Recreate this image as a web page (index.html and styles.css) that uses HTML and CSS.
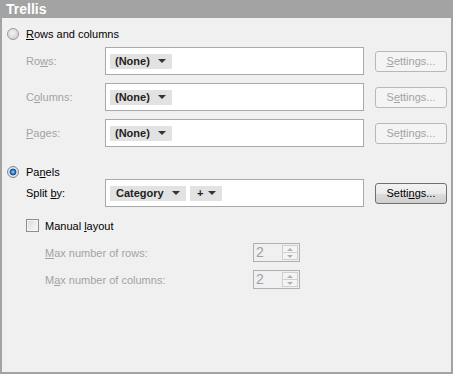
FILE: index.html
```html
<!DOCTYPE html>
<html lang="en">
<head>
    <meta charset="UTF-8">
    <title>Trellis</title>
    <link rel="stylesheet" href="styles.css">
</head>
<body>
    <div class="window">
        <div class="title">Trellis</div>

        <div class="content">
            <div class="radio-row first">
                <span class="radio"></span>
                <span class="label"><u>R</u>ows and columns</span>
            </div>

            <div class="axis-row">
                <span class="axis-label disabled">Ro<u>w</u>s:</span>
                <div class="axis-box">
                    <span class="pill"><b>(None)</b><span class="arrow"></span></span>
                </div>
                <button class="settings-btn" disabled><u>S</u>ettings...</button>
            </div>

            <div class="axis-row">
                <span class="axis-label disabled">C<u>o</u>lumns:</span>
                <div class="axis-box">
                    <span class="pill"><b>(None)</b><span class="arrow"></span></span>
                </div>
                <button class="settings-btn" disabled>S<u>e</u>ttings...</button>
            </div>

            <div class="axis-row">
                <span class="axis-label disabled"><u>P</u>ages:</span>
                <div class="axis-box">
                    <span class="pill"><b>(None)</b><span class="arrow"></span></span>
                </div>
                <button class="settings-btn" disabled>Se<u>t</u>tings...</button>
            </div>

            <div class="radio-row panels">
                <span class="radio checked"></span>
                <span class="label">Pa<u>n</u>els</span>
            </div>

            <div class="axis-row split">
                <span class="axis-label">Split <u>b</u>y:</span>
                <div class="axis-box">
                    <span class="pill wide"><b>Category</b><span class="arrow"></span></span>
                    <span class="pill plus"><b>+</b><span class="arrow"></span></span>
                </div>
                <button class="settings-btn active">Setti<u>n</u>gs...</button>
            </div>

            <div class="check-row">
                <span class="checkbox"></span>
                <span class="label">Manual <u>l</u>ayout</span>
            </div>

            <div class="spin-row">
                <span class="spin-label disabled"><u>M</u>ax number of rows:</span>
                <div class="spinner">
                    <span class="spin-value">2</span>
                    <span class="spin-buttons">
                        <span class="spin-up"></span>
                        <span class="spin-down"></span>
                    </span>
                </div>
            </div>

            <div class="spin-row">
                <span class="spin-label disabled">M<u>a</u>x number of columns:</span>
                <div class="spinner">
                    <span class="spin-value">2</span>
                    <span class="spin-buttons">
                        <span class="spin-up"></span>
                        <span class="spin-down"></span>
                    </span>
                </div>
            </div>
        </div>
    </div>
</body>
</html>
```

FILE: styles.css
```css
* {
    box-sizing: border-box;
}

body {
    margin: 0;
    font-family: 'Liberation Sans', Arial, sans-serif;
    font-size: 11px;
    color: #000;
}

u {
    text-decoration: underline;
    text-underline-offset: 1px;
}

.window {
    width: 453px;
    height: 374px;
    background-color: #f0f0f0;
    border: 2px solid #a3a3a3;
    border-top: none;
}

.title {
    height: 18px;
    margin: 0 -2px;
    padding-left: 6px;
    background-color: #a3a3a3;
    color: #fff;
    font-size: 14px;
    font-weight: bold;
    line-height: 18px;
}

.content {
    padding-left: 5px;
}

.disabled {
    color: #a3a3a3;
}

/* radio buttons */
.radio-row {
    display: flex;
    align-items: center;
    height: 12px;
}

.radio-row.first {
    margin-top: 10px;
}

.radio-row.panels {
    margin-top: 19px;
}

.radio {
    width: 12px;
    height: 12px;
    border-radius: 50%;
    border: 1px solid #9a9a9a;
    background: radial-gradient(circle at 45% 40%, #f4f4f4 0, #dcdcdc 55%, #c4c4c4 100%);
    margin-right: 7px;
    flex-shrink: 0;
}

.radio.checked {
    border-color: #7f8a99;
    background: radial-gradient(circle at 50% 50%, #9fdcff 0, #2a8ad4 25%, #0b3f82 45%, #e6e6e6 52%, #d0d0d0 100%);
}

/* axis rows */
.axis-row {
    display: flex;
    align-items: center;
    height: 28px;
    margin-top: 8px;
    padding-left: 19px;
}

.radio-row.first + .axis-row {
    margin-top: 7px;
}

.axis-row.split {
    margin-top: 1px;
}

.axis-label {
    width: 79px;
}

.axis-box {
    display: flex;
    align-items: center;
    gap: 4px;
    width: 259px;
    height: 28px;
    padding-left: 4px;
    background-color: #fff;
    border: 1px solid #a9a9a9;
}

.pill {
    display: flex;
    align-items: center;
    width: 62px;
    height: 15px;
    padding-left: 5px;
    background-color: #e2e2e2;
    color: #222;
}

.pill.wide {
    width: 76px;
    padding-left: 6px;
}

.pill.plus {
    width: 32px;
    padding-left: 7px;
}

.pill b {
    flex: 1;
}

.arrow {
    width: 0;
    height: 0;
    margin-right: 6px;
    border-left: 4px solid transparent;
    border-right: 4px solid transparent;
    border-top: 4px solid #333;
}

.settings-btn {
    width: 72px;
    height: 21px;
    margin-left: 11px;
    padding: 0;
    font-family: inherit;
    font-size: 11px;
    color: #a3a3a3;
    background-color: #f4f4f4;
    border: 1px solid #b5b9bc;
    border-radius: 3px;
}

.settings-btn.active {
    color: #000;
    border-color: #707070;
    background: linear-gradient(#f2f2f2 0, #ebebeb 50%, #dddddd 50%, #cfcfcf 100%);
}

/* manual layout */
.check-row {
    display: flex;
    align-items: center;
    height: 13px;
    margin-top: 12px;
    padding-left: 19px;
}

.checkbox {
    width: 13px;
    height: 13px;
    border: 1px solid #8e8f8f;
    background: linear-gradient(135deg, #d9d9d9 0, #eeeeee 60%, #f8f8f8 100%);
    box-shadow: inset 0 0 0 1px #f4f4f4;
    margin-right: 6px;
}

.spin-row {
    display: flex;
    align-items: center;
    height: 19px;
    margin-top: 8px;
    padding-left: 38px;
}

.check-row + .spin-row {
    margin-top: 11px;
}

.spin-label {
    width: 208px;
}

.spinner {
    display: flex;
    width: 47px;
    height: 19px;
    border: 1px solid #b0b0b0;
    background-color: #f0f0f0;
}

.spin-value {
    flex: 1;
    padding-left: 2px;
    font-size: 14px;
    line-height: 17px;
    color: #9aa0ac;
}

.spin-buttons {
    display: flex;
    flex-direction: column;
    width: 16px;
    margin: 1px;
    border: 1px solid #cfcfcf;
}

.spin-up,
.spin-down {
    flex: 1;
    display: flex;
    align-items: center;
    justify-content: center;
    background-color: #f4f4f4;
}

.spin-up {
    border-bottom: 1px solid #cfcfcf;
}

.spin-up::after {
    content: "";
    border-left: 3px solid transparent;
    border-right: 3px solid transparent;
    border-bottom: 3px solid #b0b0b0;
}

.spin-down::after {
    content: "";
    border-left: 3px solid transparent;
    border-right: 3px solid transparent;
    border-top: 3px solid #b0b0b0;
}
```
